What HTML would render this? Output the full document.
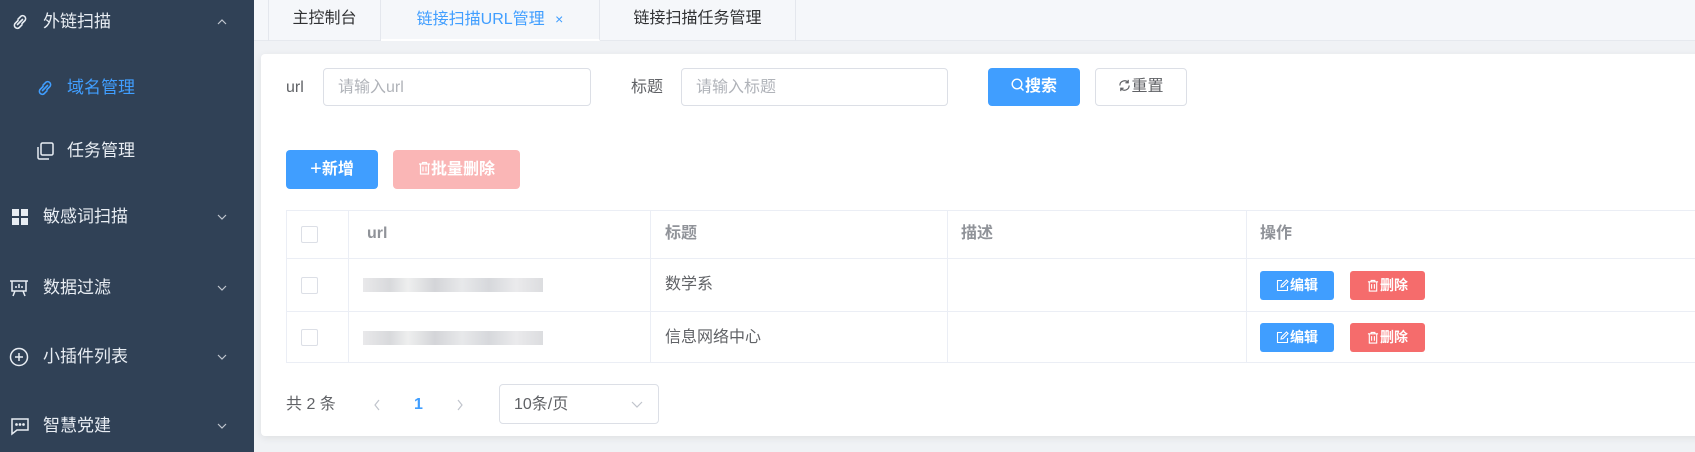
<!DOCTYPE html>
<html><head><meta charset="utf-8"><style>
*{box-sizing:border-box;margin:0;padding:0}
body{width:1695px;height:452px;overflow:hidden;background:#f0f2f5;font-family:"Liberation Sans","Noto Sans CJK SC",sans-serif;position:relative;font-size:16px;line-height:22px}
.side{position:absolute;left:0;top:0;width:254px;height:452px;background:#304156}
.mi{position:absolute;left:0;width:254px;height:24px;color:#e8edf3;font-size:17px;line-height:24px}
.mi .ic{position:absolute;top:2px;width:20px;height:20px}
.mi .tx{position:absolute;top:0}
.mi .ar{position:absolute;left:215px;top:5px}
.tabs{position:absolute;left:254px;top:0;right:0;height:41px;background:#f5f7fa;border-bottom:1px solid #e6e9ee}
.tab{position:absolute;top:0;height:41px;line-height:38px;font-size:16px;color:#303133;border-right:1px solid #e4e7ed;text-align:center}
.card{position:absolute;left:261px;top:54px;width:1450px;height:382px;background:#fff;border-radius:4px;box-shadow:0 2px 8px rgba(0,0,0,.08)}
.abs{position:absolute}
.lbl{font-size:16px;color:#606266;line-height:22px}
.inp{border:1px solid #dcdfe6;border-radius:4px;background:#fff;color:#b0b3b9;font-size:16px;padding-left:14px;padding-top:2px;line-height:34px}
.btn{border-radius:4px;color:#fff;font-size:16px;text-align:center;font-weight:bold}
.tbl{position:absolute;left:286px;top:210px;width:1420px;height:153px;border:1px solid #ebeef5}
.hl{position:absolute;left:0;right:0;height:1px;background:#ebeef5}
.vl{position:absolute;top:0;bottom:0;width:1px;background:#ebeef5}
.th{position:absolute;top:12px;color:#909399;font-weight:bold;font-size:16px;line-height:22px}
.cb{position:absolute;left:14px;width:17px;height:17px;border:1px solid #dcdfe6;border-radius:2px;background:#fff}
.td{position:absolute;color:#606266;font-size:16px;line-height:22px}
.blur{position:absolute;left:76px;width:180px;height:14px;background:linear-gradient(90deg,#e6e6e8 0,#d4d5d8 15%,#eceded 25%,#cfd0d4 40%,#e5e6e8 55%,#d2d4d8 70%,#e8e8ea 85%,#d8d9dc 100%);opacity:.9}
.sb{position:absolute;height:29px;line-height:29px;border-radius:3px;color:#fff;font-size:14px;font-weight:bold;text-align:center}
.sb svg{vertical-align:-2px;margin-right:1px}
</style></head><body>
<div class="side">
  <div class="mi" style="top:10px">
    <svg class="ic" style="left:10px" viewBox="0 0 20 20" fill="none" stroke="#e8edf3" stroke-width="1.6" stroke-linecap="round"><path d="M7.5 12.5l5-5M8 8.5L5 11.5a3 3 0 004.2 4.2L12 12.8M12 11.5l3-3a3 3 0 00-4.2-4.2L8 7.2"/></svg>
    <span class="tx" style="left:43px">外链扫描</span>
    <svg class="ar" width="14" height="14" viewBox="0 0 14 14" fill="none" stroke="#c0c6cf" stroke-width="1.2"><path d="M3 9l4-4 4 4"/></svg>
  </div>
  <div class="mi" style="top:76px;color:#409eff">
    <svg class="ic" style="left:35px" viewBox="0 0 20 20" fill="none" stroke="#409eff" stroke-width="1.6" stroke-linecap="round"><path d="M7.5 12.5l5-5M8 8.5L5 11.5a3 3 0 004.2 4.2L12 12.8M12 11.5l3-3a3 3 0 00-4.2-4.2L8 7.2"/></svg>
    <span class="tx" style="left:67px">域名管理</span>
  </div>
  <div class="mi" style="top:139px">
    <svg class="ic" style="left:35px" viewBox="0 0 20 20" fill="none" stroke="#e8edf3" stroke-width="1.5"><rect x="6" y="2" width="12" height="12" rx="1.5"/><path d="M3 6v10.5a1.5 1.5 0 001.5 1.5H14"/></svg>
    <span class="tx" style="left:67px">任务管理</span>
  </div>
  <div class="mi" style="top:205px">
    <svg class="ic" style="left:10px" viewBox="0 0 20 20" fill="#e8edf3"><rect x="2" y="2" width="7" height="7"/><rect x="11" y="2" width="7" height="7"/><rect x="2" y="11" width="7" height="7"/><rect x="11" y="11" width="7" height="7"/></svg>
    <span class="tx" style="left:43px">敏感词扫描</span>
    <svg class="ar" width="14" height="14" viewBox="0 0 14 14" fill="none" stroke="#c0c6cf" stroke-width="1.2"><path d="M3 5l4 4 4-4"/></svg>
  </div>
  <div class="mi" style="top:276px">
    <svg class="ic" style="left:9px" viewBox="0 0 20 20" fill="none" stroke="#e8edf3" stroke-width="1.5"><path d="M1 3h18M3 3v10h14V3M6 13l-2 5M14 13l2 5M7 10V8M10 10V6M13 10V8"/></svg>
    <span class="tx" style="left:43px">数据过滤</span>
    <svg class="ar" width="14" height="14" viewBox="0 0 14 14" fill="none" stroke="#c0c6cf" stroke-width="1.2"><path d="M3 5l4 4 4-4"/></svg>
  </div>
  <div class="mi" style="top:345px">
    <svg class="ic" style="left:9px" viewBox="0 0 20 20" fill="none" stroke="#e8edf3" stroke-width="1.5"><circle cx="10" cy="10" r="8.5"/><path d="M10 6v8M6 10h8"/></svg>
    <span class="tx" style="left:43px">小插件列表</span>
    <svg class="ar" width="14" height="14" viewBox="0 0 14 14" fill="none" stroke="#c0c6cf" stroke-width="1.2"><path d="M3 5l4 4 4-4"/></svg>
  </div>
  <div class="mi" style="top:414px">
    <svg class="ic" style="left:10px" viewBox="0 0 20 20" fill="none" stroke="#e8edf3" stroke-width="1.5"><path d="M2 3h16v11H7l-5 4z"/><circle cx="6.5" cy="8.5" r=".6" fill="#e8edf3"/><circle cx="10" cy="8.5" r=".6" fill="#e8edf3"/><circle cx="13.5" cy="8.5" r=".6" fill="#e8edf3"/></svg>
    <span class="tx" style="left:43px">智慧党建</span>
    <svg class="ar" width="14" height="14" viewBox="0 0 14 14" fill="none" stroke="#c0c6cf" stroke-width="1.2"><path d="M3 5l4 4 4-4"/></svg>
  </div>
</div>

<div class="tabs">
  <div class="tab" style="left:14px;width:113px;border-left:1px solid #e4e7ed">主控制台</div>
  <div class="tab" style="left:127px;width:219px;color:#409eff;border-bottom:2px solid #fff">链接扫描URL管理 <span style="font-size:14px;margin-left:6px">×</span></div>
  <div class="tab" style="left:346px;width:196px">链接扫描任务管理</div>
</div>

<div class="card"></div>
<div class="abs lbl" style="left:286px;top:77px">url</div>
<div class="abs inp" style="left:323px;top:68px;width:268px;height:38px">请输入url</div>
<div class="abs lbl" style="left:631px;top:77px">标题</div>
<div class="abs inp" style="left:681px;top:68px;width:267px;height:38px">请输入标题</div>
<div class="abs btn" style="left:988px;top:68px;width:92px;height:38px;line-height:38px;background:#409eff">
<svg width="14" height="14" viewBox="0 0 14 14" fill="none" stroke="#fff" stroke-width="1.4" style="vertical-align:-1px"><circle cx="6" cy="6" r="4.8"/><path d="M9.5 9.5l3 3"/></svg>搜索</div>
<div class="abs btn" style="left:1095px;top:68px;width:92px;height:38px;line-height:36px;border:1px solid #dcdfe6;color:#606266;font-weight:normal">
<svg width="13" height="13" viewBox="0 0 14 14" fill="none" stroke="#606266" stroke-width="1.3" style="vertical-align:-1px"><path d="M12 7a5 5 0 01-9 3M2 7a5 5 0 019-3M11 1v3H8M3 13v-3h3"/></svg>重置</div>
<div class="abs btn" style="left:286px;top:150px;width:92px;height:39px;line-height:39px;background:#409eff"><span style="font-weight:normal;font-size:20px;vertical-align:-1px">+</span>新增</div>
<div class="abs btn" style="left:393px;top:150px;width:127px;height:39px;line-height:39px;background:#fab6b6">
<svg width="13" height="14" viewBox="0 0 13 14" fill="none" stroke="#fff" stroke-width="1.2" style="vertical-align:-1px"><path d="M1 3h11M4.5 3V1.5h4V3M2.5 3v10h8V3M5 5.5v5M8 5.5v5"/></svg>批量删除</div>

<div class="tbl">
  <div class="hl" style="top:47px"></div>
  <div class="hl" style="top:100px"></div>
  <div class="vl" style="left:61px"></div>
  <div class="vl" style="left:363px"></div>
  <div class="vl" style="left:660px"></div>
  <div class="vl" style="left:959px"></div>
  <div class="cb" style="top:15px"></div>
  <div class="th" style="left:80px">url</div>
  <div class="th" style="left:378px">标题</div>
  <div class="th" style="left:674px">描述</div>
  <div class="th" style="left:973px">操作</div>
  <div class="cb" style="top:66px"></div>
  <div class="blur" style="top:67px"></div>
  <div class="td" style="left:378px;top:63px">数学系</div>
  <div class="cb" style="top:118px"></div>
  <div class="blur" style="top:120px"></div>
  <div class="td" style="left:378px;top:116px">信息网络中心</div>
  <div class="sb" style="left:973px;top:60px;width:74px;background:#409eff"><svg width="13" height="13" viewBox="0 0 13 13" fill="none" stroke="#fff" stroke-width="1.1"><path d="M6 1.5H1.5v10h10V7M5 8l.4-2L10.5 1l1.5 1.5L7 7.6z"/></svg>编辑</div>
  <div class="sb" style="left:1063px;top:60px;width:75px;background:#f56c6c"><svg width="12" height="13" viewBox="0 0 13 14" fill="none" stroke="#fff" stroke-width="1.2"><path d="M1 3h11M4.5 3V1.5h4V3M2.5 3v10h8V3M5 5.5v5M8 5.5v5"/></svg>删除</div>
  <div class="sb" style="left:973px;top:112px;width:74px;background:#409eff"><svg width="13" height="13" viewBox="0 0 13 13" fill="none" stroke="#fff" stroke-width="1.1"><path d="M6 1.5H1.5v10h10V7M5 8l.4-2L10.5 1l1.5 1.5L7 7.6z"/></svg>编辑</div>
  <div class="sb" style="left:1063px;top:112px;width:75px;background:#f56c6c"><svg width="12" height="13" viewBox="0 0 13 14" fill="none" stroke="#fff" stroke-width="1.2"><path d="M1 3h11M4.5 3V1.5h4V3M2.5 3v10h8V3M5 5.5v5M8 5.5v5"/></svg>删除</div>
</div>

<div class="abs" style="left:286px;top:394px;color:#606266;font-size:16px">共 2 条</div>
<svg class="abs" style="left:372px;top:398px" width="10" height="14" viewBox="0 0 10 14" fill="none" stroke="#c0c4cc" stroke-width="1.2"><path d="M7 2L3 7l4 5"/></svg>
<div class="abs" style="left:414px;top:394px;color:#409eff;font-weight:bold;font-size:16px">1</div>
<svg class="abs" style="left:455px;top:398px" width="10" height="14" viewBox="0 0 10 14" fill="none" stroke="#c0c4cc" stroke-width="1.2"><path d="M3 2l4 5-4 5"/></svg>
<div class="abs inp" style="left:499px;top:384px;width:160px;height:40px;line-height:36px;color:#606266">10条/页
<svg width="14" height="14" viewBox="0 0 14 14" fill="none" stroke="#c0c4cc" stroke-width="1.2" style="position:absolute;right:14px;top:12px"><path d="M2 5l5 5 5-5"/></svg></div>
</body></html>
